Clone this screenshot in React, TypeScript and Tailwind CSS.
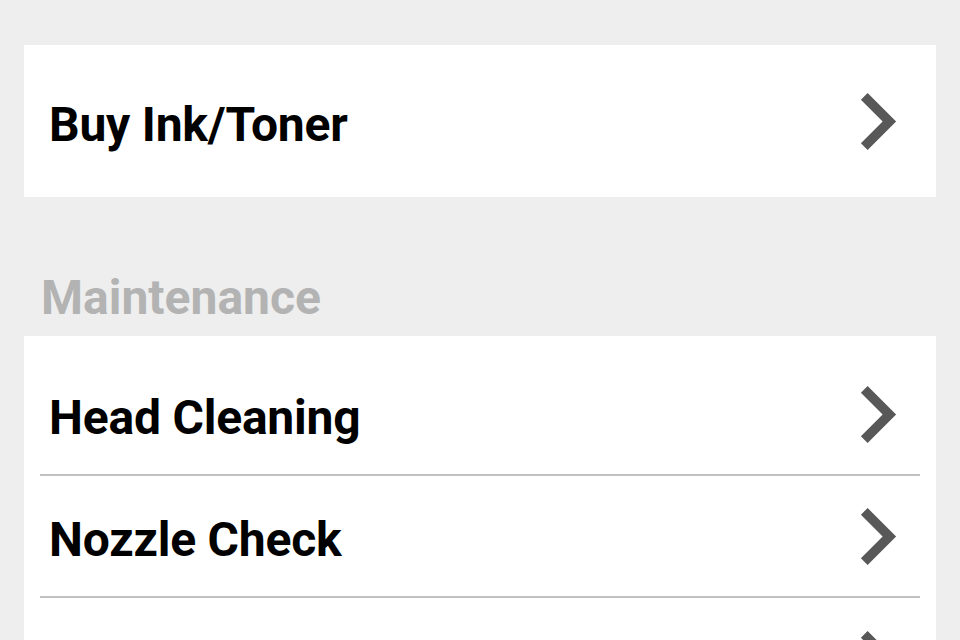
import React from "react";

const Chevron = () => (
  <svg
    viewBox="8.59 6 7.41 12"
    className="h-[57px] w-[37px] shrink-0 fill-[#585858]"
    aria-hidden="true"
  >
    <path d="M10 6L8.59 7.41 13.17 12l-4.58 4.59L10 18l6-6z" />
  </svg>
);

const Row = ({ label, divider }: { label: string; divider?: boolean }) => (
  <div
    className={`flex h-[122px] items-center justify-between pl-[9px] pr-[23px] ${
      divider ? "border-b-2 border-[#c2c2c2]" : ""
    }`}
  >
    <span className="pt-[8px] text-[48px] font-bold leading-none tracking-[-0.2px] text-black">
      {label}
    </span>
    <Chevron />
  </div>
);

const App = () => {
  return (
    <div className="h-[640px] w-[960px] overflow-hidden bg-[#eeeeee] px-6 pt-[45px] font-['Roboto',sans-serif]">
      {/* shopping */}
      <div className="flex h-[152px] items-center justify-between bg-white pl-[25px] pr-[39px]">
        <span className="pt-[8px] text-[48px] font-bold leading-none tracking-[-0.2px] text-black">
          Buy Ink/Toner
        </span>
        <Chevron />
      </div>

      {/* maintenance */}
      <h3 className="flex h-[139px] items-center pl-[17px] pt-[63px] text-[48px] font-bold leading-none text-[#b3b3b3]">
        Maintenance
      </h3>

      <div className="bg-white px-4 pt-[18px]">
        <Row label="Head Cleaning" divider />
        <Row label="Nozzle Check" divider />
        <Row label="Print Head Alignment" />
      </div>
    </div>
  );
};

export default App;
